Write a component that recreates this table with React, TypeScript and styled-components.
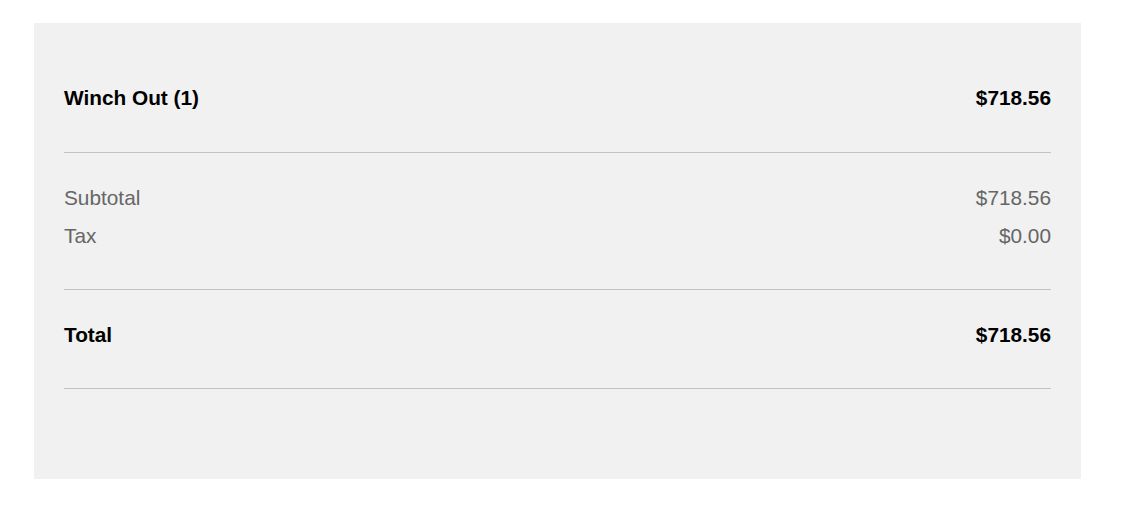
import styled, { createGlobalStyle } from "styled-components";

const GlobalStyle = createGlobalStyle`
  body {
    margin: 0;
    background: #ffffff;
    font-family: "Liberation Sans", Arial, sans-serif;
  }
`;

const Panel = styled.div`
  margin: 23px 0 0 34px;
  width: 1047px;
  box-sizing: border-box;
  padding: 30px 30px 90px;
  background-color: #f1f1f1;
`;

const Section = styled.div<{ $pb: number }>`
  display: flex;
  flex-direction: column;
  gap: 14px;
  padding: 33px 0 ${(props) => props.$pb}px;
  border-bottom: 1px solid #c2c2c2;
`;

const Row = styled.div<{ $strong?: boolean }>`
  display: flex;
  justify-content: space-between;
  align-items: center;
  font-size: 20.8px;
  line-height: 24px;
  font-weight: ${(props) => (props.$strong ? 700 : 400)};
  color: ${(props) => (props.$strong ? "#000000" : "#666666")};
`;

const items = [{ name: "Winch Out", qty: 1, price: 718.56 }];
const tax = 0;

const money = (n: number) => `$${n.toFixed(2)}`;

export default function App() {
  const subtotal = items.reduce((sum, i) => sum + i.price * i.qty, 0);

  return (
    <>
      <GlobalStyle />
      <Panel>
        <Section $pb={42}>
          {items.map((item) => (
            <Row $strong key={item.name}>
              <span>
                {item.name} ({item.qty})
              </span>
              <span>{money(item.price * item.qty)}</span>
            </Row>
          ))}
        </Section>
        <Section $pb={41}>
          <Row>
            <span>Subtotal</span>
            <span>{money(subtotal)}</span>
          </Row>
          <Row>
            <span>Tax</span>
            <span>{money(tax)}</span>
          </Row>
        </Section>
        <Section $pb={41}>
          <Row $strong>
            <span>Total</span>
            <span>{money(subtotal + tax)}</span>
          </Row>
        </Section>
      </Panel>
    </>
  );
}
